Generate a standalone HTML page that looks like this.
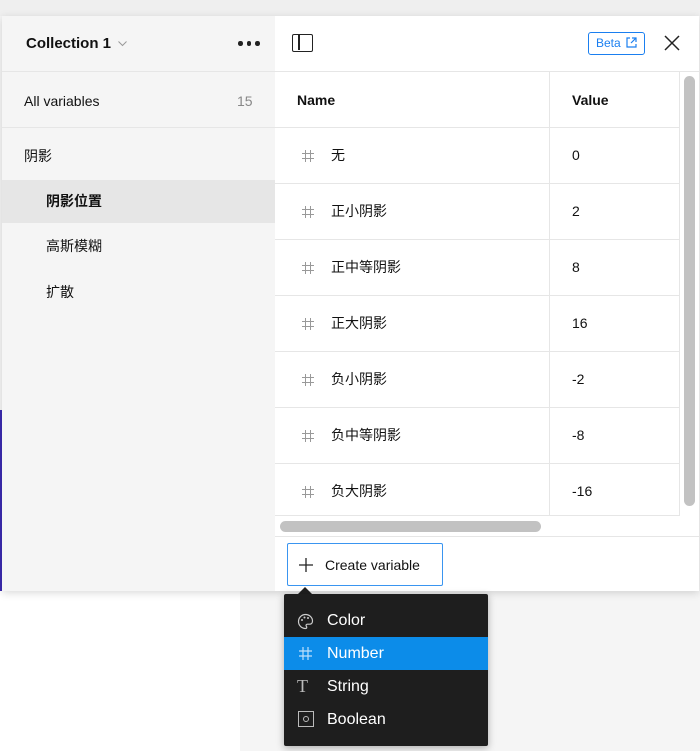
<!DOCTYPE html>
<html><head><meta charset="utf-8"><style>
*{box-sizing:border-box;margin:0;padding:0}
body{width:700px;height:751px;overflow:hidden;position:relative;background:#f5f5f5;font-family:"Liberation Sans","Noto Sans CJK SC",sans-serif;color:#111}
.abs{position:absolute}
.top{left:0;top:0;width:700px;height:16px;background:#efefef}
.wl{left:0;top:591px;width:240px;height:160px;background:#fff}
.purple{left:0;top:410px;width:3px;height:181px;background:#3b2bb0}
.panel{left:2px;top:16px;width:697px;height:575px;background:#fff;box-shadow:0 2px 8px rgba(0,0,0,.15)}
.side{left:0;top:0;width:273px;height:575px;background:#f5f5f5}
.t{position:absolute;font-size:14px;line-height:16px;white-space:nowrap}
.hl{left:0;top:164px;width:273px;height:43px;background:#e6e6e6}
.line{position:absolute;background:#e6e6e6}
.h{position:absolute;left:299px}
.menu{left:284px;top:594px;width:204px;height:152px;background:#1e1e1e;border-radius:2px;box-shadow:0 2px 8px rgba(0,0,0,.3)}
.mi{position:absolute;left:0;width:204px;height:33px;color:#fff;font-size:16px}
.mi span{position:absolute;left:43px;top:8px}
</style></head><body>
<div class="abs top"></div>
<div class="abs wl"></div>
<div class="abs purple"></div>
<div class="abs panel">
 <div class="abs side">
  <div class="t" style="left:24px;top:20px;font-weight:bold;font-size:15px">Collection 1</div>
  <svg class="abs" style="left:116px;top:25px" width="9" height="6"><path d="M0.5 0.5L4.5 4.5L8.5 0.5" fill="none" stroke="#999" stroke-width="1"/></svg>
  <div class="abs" style="left:236px;top:25px;width:22px;height:5px">
   <div class="abs" style="left:0;top:0;width:4.5px;height:4.5px;border-radius:50%;background:#222"></div>
   <div class="abs" style="left:8.5px;top:0;width:4.5px;height:4.5px;border-radius:50%;background:#222"></div>
   <div class="abs" style="left:17px;top:0;width:4.5px;height:4.5px;border-radius:50%;background:#222"></div>
  </div>
  <div class="line" style="left:0;top:55px;width:273px;height:1px"></div>
  <div class="t" style="left:22px;top:77px">All variables</div>
  <div class="t" style="left:235px;top:77px;color:#888">15</div>
  <div class="line" style="left:0;top:111px;width:273px;height:1px"></div>
  <div class="t" style="left:22px;top:132px">阴影</div>
  <div class="abs hl"></div>
  <div class="t" style="left:44px;top:177px;font-weight:bold">阴影位置</div>
  <div class="t" style="left:44px;top:222px">高斯模糊</div>
  <div class="t" style="left:44px;top:268px">扩散</div>
 </div>
 <div class="abs" style="left:290px;top:18px;width:21px;height:18px;border:1.5px solid #222;border-radius:2px"><div class="abs" style="left:5px;top:0;width:1.5px;height:15px;background:#222"></div></div>
 <div class="abs" style="left:586px;top:16px;width:57px;height:23px;border:1px solid #1a7ff0;border-radius:3px;color:#1a7ff0;font-size:12px;line-height:21px;padding-left:7px">Beta <svg width="11" height="11" viewBox="0 0 11 11" style="vertical-align:-1px;margin-left:2px"><path d="M4 1H1v9h9V7M6 1h4v4M10 1L5 6" fill="none" stroke="#1a7ff0" stroke-width="1.2"/></svg></div>
 <svg class="abs" style="left:662px;top:19px" width="16" height="16"><path d="M1 1L15 15M15 1L1 15" stroke="#222" stroke-width="1.5"/></svg>
 <div class="line" style="left:273px;top:55px;width:424px;height:1px"></div>
 <div class="t" style="left:295px;top:76px;font-weight:bold">Name</div>
 <div class="t" style="left:570px;top:76px;font-weight:bold">Value</div>
 <div class="line" style="left:547px;top:56px;width:1px;height:444px"></div>
 <div class="line" style="left:677px;top:56px;width:1px;height:444px"></div>
 <div class="line" style="left:273px;top:111px;width:404px;height:1px"></div>
 <div class="line" style="left:273px;top:167px;width:404px;height:1px"></div>
 <div class="line" style="left:273px;top:223px;width:404px;height:1px"></div>
 <div class="line" style="left:273px;top:279px;width:404px;height:1px"></div>
 <div class="line" style="left:273px;top:335px;width:404px;height:1px"></div>
 <div class="line" style="left:273px;top:391px;width:404px;height:1px"></div>
 <div class="line" style="left:273px;top:447px;width:404px;height:1px"></div>
 <div class="line" style="left:273px;top:499px;width:404px;height:1px"></div>
 <svg class="h" style="top:133px" width="14" height="14"><path d="M4.5 1V13M9.5 1V13M1 4.5H13M1 9.5H13" stroke="#999" stroke-width="1"/></svg>
 <svg class="h" style="top:189px" width="14" height="14"><path d="M4.5 1V13M9.5 1V13M1 4.5H13M1 9.5H13" stroke="#999" stroke-width="1"/></svg>
 <svg class="h" style="top:245px" width="14" height="14"><path d="M4.5 1V13M9.5 1V13M1 4.5H13M1 9.5H13" stroke="#999" stroke-width="1"/></svg>
 <svg class="h" style="top:301px" width="14" height="14"><path d="M4.5 1V13M9.5 1V13M1 4.5H13M1 9.5H13" stroke="#999" stroke-width="1"/></svg>
 <svg class="h" style="top:357px" width="14" height="14"><path d="M4.5 1V13M9.5 1V13M1 4.5H13M1 9.5H13" stroke="#999" stroke-width="1"/></svg>
 <svg class="h" style="top:413px" width="14" height="14"><path d="M4.5 1V13M9.5 1V13M1 4.5H13M1 9.5H13" stroke="#999" stroke-width="1"/></svg>
 <svg class="h" style="top:469px" width="14" height="14"><path d="M4.5 1V13M9.5 1V13M1 4.5H13M1 9.5H13" stroke="#999" stroke-width="1"/></svg>
 <div class="t" style="left:329px;top:131px">无</div><div class="t" style="left:570px;top:131px">0</div>
 <div class="t" style="left:329px;top:187px">正小阴影</div><div class="t" style="left:570px;top:187px">2</div>
 <div class="t" style="left:329px;top:243px">正中等阴影</div><div class="t" style="left:570px;top:243px">8</div>
 <div class="t" style="left:329px;top:299px">正大阴影</div><div class="t" style="left:570px;top:299px">16</div>
 <div class="t" style="left:329px;top:355px">负小阴影</div><div class="t" style="left:570px;top:355px">-2</div>
 <div class="t" style="left:329px;top:411px">负中等阴影</div><div class="t" style="left:570px;top:411px">-8</div>
 <div class="t" style="left:329px;top:467px">负大阴影</div><div class="t" style="left:570px;top:467px">-16</div>
 <div class="abs" style="left:682px;top:60px;width:11px;height:430px;border-radius:6px;background:#c2c2c2"></div>
 <div class="abs" style="left:278px;top:505px;width:261px;height:11px;border-radius:6px;background:#c2c2c2"></div>
 <div class="line" style="left:273px;top:520px;width:424px;height:1px"></div>
 <div class="abs" style="left:285px;top:527px;width:156px;height:43px;border:1px solid #3a95f0;border-radius:2px">
  <svg class="abs" style="left:11px;top:14px" width="14" height="14"><path d="M7 0V14M0 7H14" stroke="#222" stroke-width="1.3"/></svg>
  <div class="t" style="left:37px;top:13px">Create variable</div>
 </div>
</div>
<div class="abs" style="left:298px;top:587px;width:0;height:0;border-left:7px solid transparent;border-right:7px solid transparent;border-bottom:7px solid #1e1e1e"></div>
<div class="abs menu">
 <div class="mi" style="top:10px"><svg class="abs" style="left:13px;top:9px" width="17" height="17" viewBox="0 0 17 17"><path d="M8.5 1.5a7 7 0 1 0 0 14c1.5 0 1.5-1.5.8-2.3-.7-.9 0-2 1.1-2h2.2c1.8 0 2.9-1.3 2.9-3.2C15.5 4.5 12.4 1.5 8.5 1.5z" fill="none" stroke="#ccc" stroke-width="1.2"/><circle cx="5" cy="7" r="1" fill="#ccc"/><circle cx="7.5" cy="4.5" r="1" fill="#ccc"/><circle cx="11" cy="5" r="1" fill="#ccc"/></svg><span>Color</span></div>
 <div class="mi" style="top:43px;background:#0c8ce9"><svg class="abs" style="left:14px;top:9px" width="15" height="15"><path d="M5 1V14M10 1V14M1 5H14M1 10H14" stroke="#bfe0fa" stroke-width="1.2"/></svg><span>Number</span></div>
 <div class="mi" style="top:76px"><span style="left:13px;color:#bbb;font-family:'Liberation Serif',serif;font-size:18px;top:6px">T</span><span>String</span></div>
 <div class="mi" style="top:109px"><div class="abs" style="left:14px;top:8px;width:16px;height:16px;border:1.3px solid #bbb"><div class="abs" style="left:3.5px;top:3.5px;width:6px;height:6px;border:1.2px solid #bbb;border-radius:50%"></div></div><span>Boolean</span></div>
</div>
</body></html>
